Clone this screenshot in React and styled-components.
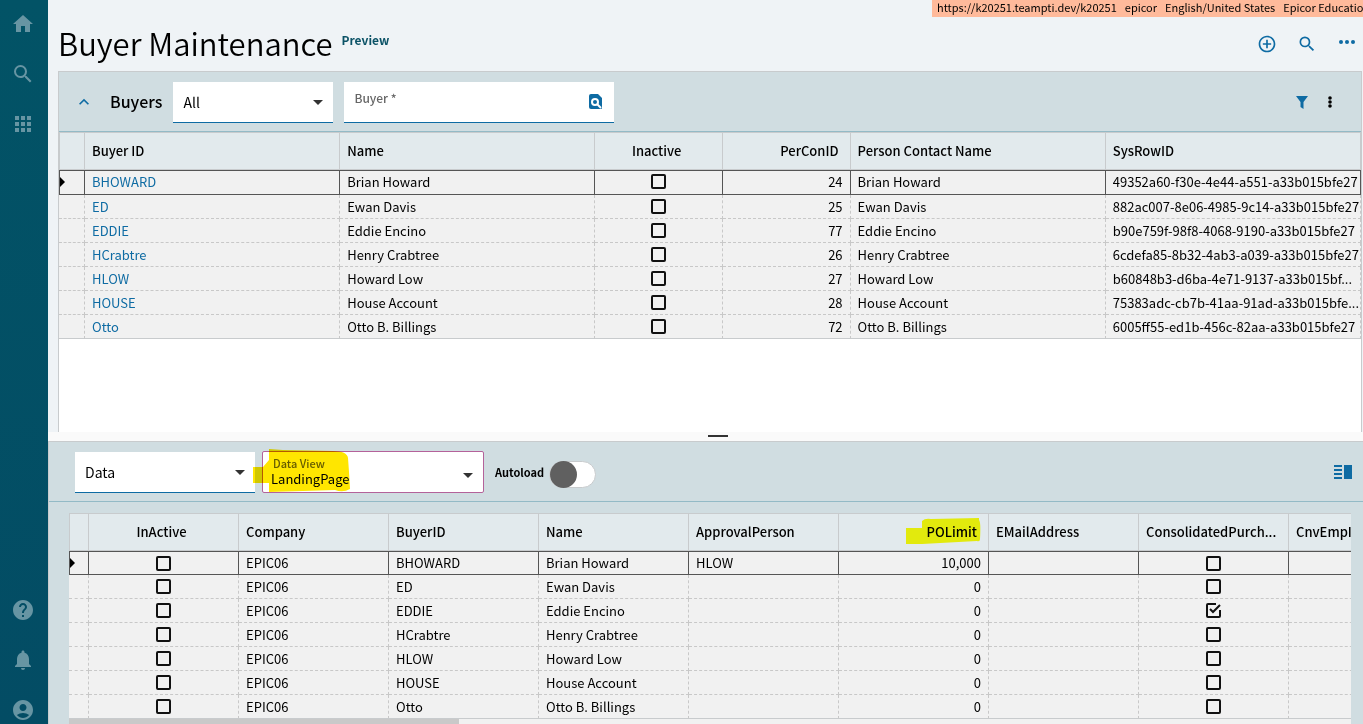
import React, { useState } from 'react';
import styled, { createGlobalStyle } from 'styled-components';
import {
  MdHome, MdSearch, MdApps, MdHelp, MdNotifications, MdAccountCircle,
  MdAddCircleOutline, MdKeyboardArrowUp, MdArrowDropDown, MdVerticalSplit,
} from 'react-icons/md';

const GlobalStyle = createGlobalStyle`
  * {
    box-sizing: border-box;
  }
  body {
    margin: 0;
    overflow: hidden;
    color: #000;
    background: #eff3f6;
    font-family: "Noto Sans CJK KR", "Noto Sans", sans-serif;
    font-size: 13px;
  }
  button, input, select {
    font: inherit;
    color: inherit;
  }
`

const Page = styled.div`
  display: flex;
  height: 100vh;
`
const Sidebar = styled.nav`
  display: flex;
  flex-direction: column;
  flex: none;
  width: 48px;
  padding: 10px 2px 0 0;
  gap: 22px;
  align-items: center;
  background: linear-gradient(#025366, #034c64);
`
const Spacer = styled.div`
  flex: 1;
`
const IconButton = styled.button`
  display: flex;
  align-items: center;
  justify-content: center;
  flex: none;
  width: ${({ $size }) => $size || 28}px;
  height: ${({ $size }) => $size || 28}px;
  padding: 0;
  border: 0;
  background: none;
  color: ${({ $color }) => $color || '#0e6ba3'};
  font-size: ${({ $icon }) => $icon || 20}px;
  cursor: pointer;
`
const Main = styled.main`
  display: flex;
  flex: 1;
  flex-direction: column;
  min-width: 0;
`
const SessionBar = styled.div`
  display: flex;
  align-self: flex-end;
  flex: none;
  width: 431px;
  height: 17px;
  padding-left: 5px;
  gap: 8px;
  overflow: hidden;
  white-space: nowrap;
  background: #ffba9b;
  font-size: 11px;
  line-height: 15px;
`
const TitleBar = styled.header`
  display: flex;
  flex: none;
  height: 54px;
  padding: 0 2px 0 10px;
  align-items: center;
`
const Title = styled.h1`
  margin: 0;
  padding-bottom: 2px;
  font-size: 31px;
  font-weight: 350;
  line-height: 52px;
`
const Preview = styled.span`
  padding: 0 0 10px 9px;
  color: #0b5266;
  font-size: 12px;
  font-weight: 700;
`
const TitleActions = styled.div`
  display: flex;
  margin-left: auto;
  gap: 12px;
`
const Buyers = styled.section`
  display: flex;
  flex: 1;
  flex-direction: column;
  margin: 0 1px 0 10px;
  border: 1px solid #c8cbcd;
  border-bottom: 0;
  background: #fff;
`
const PanelBar = styled.div`
  display: flex;
  flex: none;
  height: 60px;
  align-items: center;
  padding: ${({ $lower }) => ($lower ? '1px 6px 0 26px' : '1px 17px 0 11px')};
  background: #d0dde1;
  border-bottom: 1px solid #93bac6;
`
const PanelTitle = styled.h2`
  margin: 0 11px 2px 12px;
  font-size: 16px;
  font-weight: 500;
`
const Field = styled.div`
  position: relative;
  display: flex;
  align-items: center;
  flex: none;
  width: ${({ $width }) => $width}px;
  height: 41px;
  margin-right: ${({ $gap }) => $gap || 0}px;
  background: #fff;
  border-bottom: 1px solid #0e6ba3;
`
const Select = styled.select`
  appearance: none;
  width: 100%;
  height: 100%;
  padding: 0 10px;
  border: 0;
  background: none;
  font-size: 14px;
`
const Arrow = styled(MdArrowDropDown)`
  position: absolute;
  right: 3px;
  top: ${({ $top }) => $top || 8}px;
  width: 24px;
  height: 24px;
  color: #333;
  pointer-events: none;
`
const FieldLabel = styled.label`
  align-self: flex-start;
  padding: 8px 0 0 10px;
  color: #666;
  font-size: 12px;
  font-weight: 500;
  line-height: 16px;
`
const BuyerInput = styled.input`
  flex: 1;
  min-width: 0;
  border: 0;
  outline: 0;
  background: none;
`
const DataView = styled.div`
  position: relative;
  display: flex;
  flex-direction: column;
  width: 222px;
  height: 42px;
  margin: 0 11px 0 7px;
  border: 1px solid #b4629a;
  border-radius: 2px;
  background: #fff;
`
const DataViewLabel = styled.label`
  padding: 4px 0 0 10px;
  color: #666;
  font-size: 11px;
  font-weight: 500;
  line-height: 15px;
`
const DataViewSelect = styled.select`
  appearance: none;
  height: 16px;
  padding: 0 8px;
  border: 0;
  background: none;
  line-height: 16px;
`
const Marker = styled.svg`
  position: absolute;
  mix-blend-mode: multiply;
  pointer-events: none;
  left: ${({ $left }) => $left}px;
  top: ${({ $top }) => $top}px;
`
const ToggleLabel = styled.label`
  display: flex;
  align-items: center;
  gap: 5px;
  font-size: 11px;
  font-weight: 700;
`
const Toggle = styled.input`
  appearance: none;
  width: 47px;
  height: 27px;
  margin: 4px 0 0;
  border: 1px solid #c8cbcd;
  border-radius: 14px;
  background: #fff;
  &::before {
    content: "";
    display: block;
    width: 27px;
    height: 27px;
    margin-top: -1px;
    border-radius: 50%;
    background: #606060;
  }
  &:checked::before {
    margin-left: 18px;
  }
`
const Splitter = styled.div`
  display: flex;
  flex: none;
  height: 9px;
  padding-bottom: 1px;
  align-items: center;
  justify-content: center;
  background: #fafafa;
  &::before {
    content: "";
    width: 20px;
    height: 2px;
    margin-left: 24px;
    background: #333;
  }
`
const DataPanel = styled.section`
  flex: none;
  border-top: 1px solid #c8cbcd;
  border-left: 1px solid #c8cbcd;
  background: #d0dde1;
`
const GridScroll = styled.div`
  margin: 11px 12px 0 20px;
  overflow: hidden;
  background: #f1f1f1;
`
const ScrollTrack = styled.div`
  height: 5px;
  background: #f1f1f1;
  &::before {
    content: "";
    display: block;
    width: 30.4%;
    height: 5px;
    background: #c9c9c9;
  }
`
const Grid = styled.table`
  table-layout: fixed;
  width: ${({ $width }) => $width || '100%'};
  border-spacing: 0;
  border-top: 1px solid #c8cbcd;
`
const align = ({ $align }) => $align || 'left';
const Th = styled.th`
  position: relative;
  height: 37px;
  padding: 0 11px 0 7px;
  overflow: hidden;
  white-space: nowrap;
  text-overflow: ellipsis;
  text-align: ${align};
  font-weight: 500;
  line-height: 18px;
  background: #e2eaed;
  border-right: 1px solid #c8cbcd;
  border-bottom: 1px solid #c8cbcd;
  &:first-child {
    border-left: 1px solid #c8cbcd;
  }
`
const HeadText = styled.span`
  position: relative;
  z-index: 1;
`
const Td = styled.td`
  height: 24px;
  padding: ${({ $flush }) => ($flush ? '0 0 0 7px' : '0 7px')};
  overflow: hidden;
  white-space: nowrap;
  text-overflow: clip;
  text-align: ${align};
  line-height: 18px;
  background: #f1f1f1;
  border-right: 1px dashed #c8c8c8;
  border-bottom: 1px dashed #c8c8c8;
`
const Row = styled.tr`
  &:first-child ${Td} {
    height: ${({ $tall }) => ($tall ? 25 : 24)}px;
    padding-bottom: ${({ $tall }) => ($tall ? 2 : 0)}px;
    border-top: 1px solid #555;
    border-right: 1px solid #555;
    border-bottom: 1px solid #555;
  }
  &:first-child ${Td}:first-child {
    border-left: 1px solid #555;
  }
  &:last-child ${Td} {
    border-bottom: 1px solid #c8cbcd;
  }
`
const Pointer = styled.span`
  display: block;
  width: 0;
  margin-left: -7px;
  border: 5px solid transparent;
  border-left-color: #000;
  border-right: 0;
`
const BuyerLink = styled.a`
  color: #0e6ba3;
  text-decoration: none;
`
const Tick = styled.input`
  appearance: none;
  display: block;
  width: 15px;
  height: 15px;
  margin: 0 auto;
  border: 2px solid #111;
  border-radius: 2px;
`
const TickDone = styled.span`
  position: relative;
  display: block;
  width: 15px;
  height: 15px;
  margin: 0 auto;
  ${Tick} {
    border-color: transparent;
  }
  svg {
    position: absolute;
    inset: 0;
    pointer-events: none;
  }
`

const buyers = [
  ['BHOWARD', 'Brian Howard', 24, '49352a60-f30e-4e44-a551-a33b015bfe27'],
  ['ED', 'Ewan Davis', 25, '882ac007-8e06-4985-9c14-a33b015bfe27'],
  ['EDDIE', 'Eddie Encino', 77, 'b90e759f-98f8-4068-9190-a33b015bfe27'],
  ['HCrabtre', 'Henry Crabtree', 26, '6cdefa85-8b32-4ab3-a039-a33b015bfe27'],
  ['HLOW', 'Howard Low', 27, 'b60848b3-d6ba-4e71-9137-a33b015bf...'],
  ['HOUSE', 'House Account', 28, '75383adc-cb7b-41aa-91ad-a33b015bfe...'],
  ['Otto', 'Otto B. Billings', 72, '6005ff55-ed1b-456c-82aa-a33b015bfe27'],
];

const Check = ({ label, defaultChecked }) => {
  const [checked, setChecked] = useState(!!defaultChecked);
  const box = (
    <Tick type="checkbox" aria-label={label} checked={checked} onChange={(e) => setChecked(e.target.checked)} />
  );
  if (!checked) return box;
  return (
    <TickDone>
      {box}
      <svg width="15" height="15" fill="none" stroke="#111" strokeWidth="2">
        <path d="M10 1H2Q1 1 1 2V13Q1 14 2 14H13Q14 14 14 13V7" />
        <path d="M4 6L7 9L14 2" />
      </svg>
    </TickDone>
  );
};

const App = () => {
  const [autoload, setAutoload] = useState(false);

  return (
    <>
      <GlobalStyle />
      <Page>
        <Sidebar>
          <IconButton $color="#6795a3" $icon={24} aria-label="Home"><MdHome /></IconButton>
          <IconButton $color="#6795a3" $icon={24} aria-label="Search"><MdSearch /></IconButton>
          <IconButton $color="#6795a3" $icon={24} aria-label="Apps"><MdApps /></IconButton>
          <Spacer />
          <IconButton $color="#6795a3" $icon={24} aria-label="Help"><MdHelp /></IconButton>
          <IconButton $color="#6795a3" $icon={24} aria-label="Notifications"><MdNotifications /></IconButton>
          <IconButton $color="#6795a3" $icon={24} aria-label="Account"><MdAccountCircle /></IconButton>
        </Sidebar>
        <Main>
          <SessionBar>
            <span>https://k20251.teampti.dev/k20251</span>
            <span>epicor</span>
            <span>English/United States</span>
            <span>Epicor Education</span>
          </SessionBar>
          <TitleBar>
            <Title>Buyer Maintenance</Title>
            <Preview>Preview</Preview>
            <TitleActions>
              <IconButton aria-label="Add"><MdAddCircleOutline /></IconButton>
              <IconButton aria-label="Search"><MdSearch /></IconButton>
              <IconButton aria-label="More">
                <svg width="16" height="8" fill="#0e6ba3">
                  <circle cx="2" cy="2" r="2" />
                  <circle cx="8" cy="2" r="2" />
                  <circle cx="14" cy="2" r="2" />
                </svg>
              </IconButton>
            </TitleActions>
          </TitleBar>

          <Buyers>
            <PanelBar>
              <IconButton aria-label="Collapse"><MdKeyboardArrowUp /></IconButton>
              <PanelTitle>Buyers</PanelTitle>
              <Field $width={160} $gap={11}>
                <Select aria-label="Buyers filter"><option>All</option></Select>
                <Arrow />
              </Field>
              <Field $width={270}>
                <FieldLabel htmlFor="buyer">Buyer *</FieldLabel>
                <BuyerInput id="buyer" />
                <IconButton $size={38} aria-label="Find buyer">
                  <svg width="13" height="15">
                    <path fill="#0e6ba3" d="M2 0H9L13 4V14Q13 15 12 15H2Q0 15 0 13V2Q0 0 2 0Z" />
                    <circle cx="6" cy="8" r="3" fill="none" stroke="#fff" strokeWidth="2" />
                    <path stroke="#fff" strokeWidth="2" d="M8 10L12 14" />
                  </svg>
                </IconButton>
              </Field>
              <Spacer />
              <IconButton aria-label="Filter">
                <svg width="12" height="13"><path fill="#0e6ba3" d="M0 0H12L7.500 6V13L4.500 11V6Z" /></svg>
              </IconButton>
              <IconButton aria-label="Options">
                <svg width="4" height="12">
                  <circle cx="2" cy="2" r="1.800" />
                  <circle cx="2" cy="6" r="1.800" />
                  <circle cx="2" cy="10" r="1.800" />
                </svg>
              </IconButton>
            </PanelBar>
            <Grid>
              <colgroup>
                <col style={{ width: 26 }} />
                <col style={{ width: '19.6%' }} />
                <col style={{ width: '19.6%' }} />
                <col style={{ width: '9.8%' }} />
                <col style={{ width: '9.8%' }} />
                <col style={{ width: '19.6%' }} />
                <col />
              </colgroup>
              <thead>
                <tr>
                  <Th />
                  <Th>Buyer ID</Th>
                  <Th>Name</Th>
                  <Th $align="center">Inactive</Th>
                  <Th $align="right">PerConID</Th>
                  <Th>Person Contact Name</Th>
                  <Th>SysRowID</Th>
                </tr>
              </thead>
              <tbody>
                {buyers.map(([id, name, con, row], i) => (
                  <Row key={id} $tall>
                    <Td>{i === 0 && <Pointer />}</Td>
                    <Td><BuyerLink href="#">{id}</BuyerLink></Td>
                    <Td>{name}</Td>
                    <Td $align="center"><Check label={`${name} inactive`} /></Td>
                    <Td $align="right">{con}</Td>
                    <Td>{name}</Td>
                    <Td $flush>{row}</Td>
                  </Row>
                ))}
              </tbody>
            </Grid>
          </Buyers>

          <Splitter />

          <DataPanel>
            <PanelBar $lower>
              <Field $width={180}>
                <Select aria-label="Source"><option>Data</option></Select>
                <Arrow />
              </Field>
              <DataView>
                <DataViewLabel htmlFor="view">Data View</DataViewLabel>
                <DataViewSelect id="view"><option>LandingPage</option></DataViewSelect>
                <Arrow $top={11} />
                <Marker $left={-10} $top={-4} width="100" height="46">
                  <path fill="#ffe600" d="M0 19H10L16 12V1L30 2L80 3Q94 3 95 10L96 24L97 41Q90 45 82 42L50 43L16 44V35H0Z" />
                </Marker>
              </DataView>
              <ToggleLabel>
                Autoload
                <Toggle type="checkbox" checked={autoload} onChange={(e) => setAutoload(e.target.checked)} />
              </ToggleLabel>
              <Spacer />
              <IconButton $icon={24} aria-label="Layout"><MdVerticalSplit /></IconButton>
            </PanelBar>
            <GridScroll>
              <Grid $width="1370px">
                <colgroup>
                  <col style={{ width: 20 }} />
                  {Array.from({ length: 9 }, (_, i) => <col key={i} style={{ width: 150 }} />)}
                </colgroup>
                <thead>
                  <tr>
                    <Th />
                    <Th $align="center">InActive</Th>
                    <Th>Company</Th>
                    <Th>BuyerID</Th>
                    <Th>Name</Th>
                    <Th>ApprovalPerson</Th>
                    <Th $align="right">
                      <Marker $left={66} $top={4} width="78" height="27">
                        <path fill="#ffff00" fillOpacity="0.95" d="M1 10H17V3Q20 0 26 1L74 0V2Q76 4 75 21Q75 24 72 23L17 26H1Z" />
                      </Marker>
                      <HeadText>POLimit</HeadText>
                    </Th>
                    <Th>EMailAddress</Th>
                    <Th>ConsolidatedPurch...</Th>
                    <Th>CnvEmpID</Th>
                  </tr>
                </thead>
                <tbody>
                  {buyers.map(([id, name], i) => (
                    <Row key={id}>
                      <Td>{i === 0 && <Pointer />}</Td>
                      <Td $align="center"><Check label={`${name} inactive`} /></Td>
                      <Td>EPIC06</Td>
                      <Td>{id}</Td>
                      <Td>{name}</Td>
                      <Td>{i === 0 ? 'HLOW' : ''}</Td>
                      <Td $align="right">{i === 0 ? '10,000' : '0'}</Td>
                      <Td />
                      <Td $align="center"><Check label={`${name} consolidated`} defaultChecked={id === 'EDDIE'} /></Td>
                      <Td />
                    </Row>
                  ))}
                </tbody>
              </Grid>
              <ScrollTrack />
            </GridScroll>
          </DataPanel>
        </Main>
      </Page>
    </>
  );
};

export default App;
